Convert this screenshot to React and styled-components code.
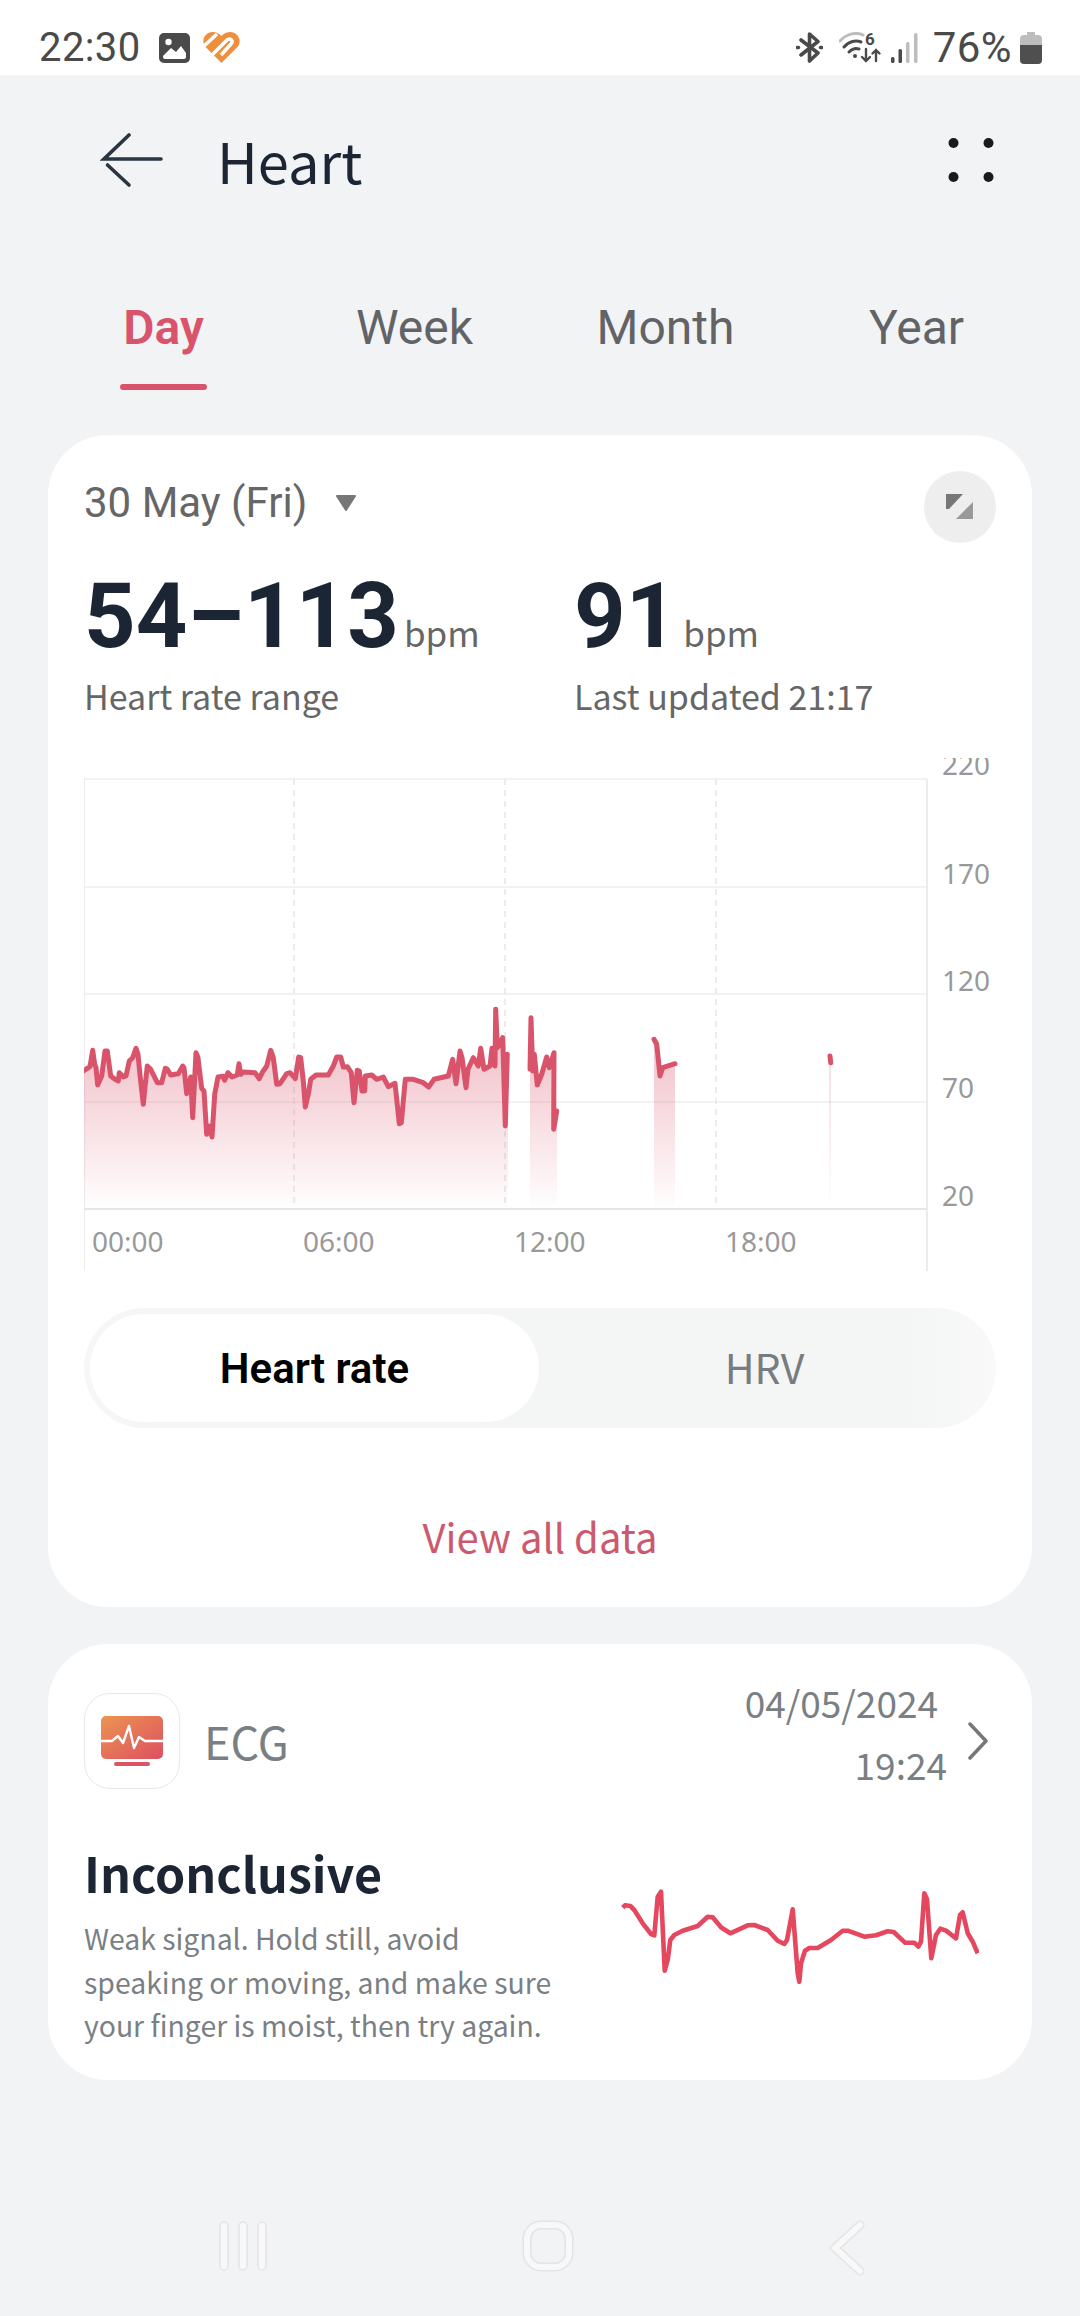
import React from 'react'
import styled, { createGlobalStyle } from 'styled-components'

const GlobalStyle = createGlobalStyle`
    html, body {
        margin: 0;
        padding: 0;
        background: #f2f3f5;
    }
    * {
        box-sizing: border-box;
    }
`

const CJK = '"Noto Sans CJK SC", "Noto Sans", sans-serif'
const ROBOTO = 'Roboto, "Liberation Sans", sans-serif'

const Page = styled.div`
    width: 1080px;
    height: 2316px;
    display: flex;
    flex-direction: column;
    overflow: hidden;
    background: #f2f3f5;
    font-family: ${CJK};
`

/* status bar */
const StatusBar = styled.div`
    height: 75px;
    flex: none;
    background: #fff;
    display: flex;
    align-items: center;
    justify-content: space-between;
    padding: 20px 38px 0 39px;
`
const StatusGroup = styled.div`
    display: flex;
    align-items: center;
`
const StatusText = styled.span`
    font-family: ${ROBOTO};
    font-size: ${p => p.$size || 40}px;
    line-height: 40px;
    color: #4a4a4a;
    letter-spacing: 0.4px;
    margin: ${p => p.$margin || 0};
`
const Icon = styled.svg`
    display: block;
    flex: none;
    margin: ${p => p.$margin || 0};
`

/* header */
const Header = styled.div`
    height: 170px;
    flex: none;
    display: flex;
    align-items: center;
    padding: 0 86px 0 100px;
`
const Title = styled.h1`
    margin: 0 0 0 53px;
    font-size: 56px;
    font-weight: 400;
    line-height: 70px;
    color: #1c2533;
    flex: 1;
`

/* tabs */
const TabRow = styled.div`
    height: 190px;
    flex: none;
    display: grid;
    grid-template-columns: repeat(4, 251px);
    padding: 0 38px;
`
const Tab = styled.div`
    display: flex;
    flex-direction: column;
    align-items: center;
    padding-top: 53px;
    font-family: ${ROBOTO};
    font-size: 48px;
    line-height: 60px;
    font-weight: ${p => (p.$active ? 600 : 400)};
    color: ${p => (p.$active ? '#d9546b' : '#616366')};
`
const TabLine = styled.div`
    width: 87px;
    height: 6px;
    border-radius: 3px;
    margin-top: 26px;
    background: #d9546b;
`

/* cards */
const Card = styled.section`
    flex: none;
    margin: ${p => p.$margin || 0};
    height: ${p => p.$height}px;
    background: #fff;
    border-radius: 60px;
    padding: 0 36px;
`
const DateRow = styled.div`
    display: flex;
    align-items: center;
    padding-top: 36px;
    height: 108px;
`
const DateText = styled.span`
    font-family: ${ROBOTO};
    font-size: 42px;
    line-height: 50px;
    color: #666;
    margin-top: -8px;
`
const ExpandButton = styled.div`
    width: 72px;
    height: 72px;
    border-radius: 50%;
    background: #eeeeee;
    margin-left: auto;
    display: flex;
    align-items: center;
    justify-content: center;
`
const Stats = styled.div`
    display: grid;
    grid-template-columns: 490px 1fr;
    margin-top: 29px;
`
const Stat = styled.div`
    display: flex;
    flex-direction: column;
`
const ValueLine = styled.div`
    display: flex;
    align-items: baseline;
    height: 90px;
`
const Value = styled.span`
    font-family: ${ROBOTO};
    font-size: 90px;
    line-height: 90px;
    font-weight: 700;
    color: #1c2533;
`
const Unit = styled.span`
    font-size: 35px;
    color: #666;
    margin-left: ${p => p.$gap || 5}px;
`
const StatLabel = styled.div`
    font-size: 34px;
    line-height: 44px;
    color: #666;
    margin-top: 12px;
`
const Chart = styled.svg`
    display: block;
    width: 916px;
    height: 520px;
    margin-top: 40px;
    font-family: "Noto Sans", sans-serif;
    font-size: 28px;
    fill: #999;
`
const Segment = styled.div`
    width: 912px;
    height: 120px;
    margin-top: 30px;
    border-radius: 60px;
    padding: 6px;
    display: flex;
    background: linear-gradient(to right, #f6f8f8 0, #f4f5f5 8%, #f4f5f5 90%, #f9f9f9 100%);
`
const SegmentItem = styled.div`
    height: 108px;
    display: flex;
    align-items: center;
    justify-content: center;
    border-radius: 54px;
    width: ${p => (p.$active ? '449px' : 'auto')};
    flex: ${p => (p.$active ? 'none' : 1)};
    background: ${p => (p.$active ? '#fff' : 'transparent')};
    padding-bottom: ${p => (p.$active ? 0 : 4)}px;
    font-family: ${p => (p.$active ? ROBOTO : CJK)};
    font-size: ${p => (p.$active ? 42 : 41)}px;
    font-weight: ${p => (p.$active ? 600 : 400)};
    color: ${p => (p.$active ? '#000' : '#777c80')};
`
const ViewAll = styled.div`
    text-align: center;
    font-size: 40px;
    line-height: 56px;
    color: #cc5a6e;
    margin-top: 80px;
`

/* ecg card */
const EcgHead = styled.div`
    display: flex;
    align-items: center;
    padding-top: 42px;
`
const EcgIcon = styled.div`
    width: 96px;
    height: 96px;
    flex: none;
    border: 1.5px solid #e8e8e8;
    border-radius: 26px;
    display: flex;
    align-items: center;
    justify-content: center;
`
const EcgName = styled.span`
    font-size: 45px;
    line-height: 56px;
    color: #7a7f83;
    margin-left: 24px;
`
const EcgWhen = styled.div`
    margin-left: auto;
    display: flex;
    flex-direction: column;
    align-items: flex-end;
    margin-top: -15px;
    font-size: 37px;
    line-height: 62px;
    color: #7a7f83;
`
const WhenLine = styled.span`
    margin-right: ${p => p.$right || 0}px;
`
const Chevron = styled.svg`
    display: block;
    flex: none;
    margin: 0 7px 0 20px;
`
const EcgBody = styled.div`
    display: flex;
    justify-content: space-between;
`
const EcgText = styled.div`
    width: 520px;
`
const EcgTitle = styled.h2`
    margin: 42px 0 0;
    font-size: 48.4px;
    line-height: 70px;
    font-weight: 600;
    color: #1c2533;
`
const EcgNote = styled.p`
    margin: 9px 0 0;
    font-size: 28.4px;
    line-height: 43.5px;
    color: #7a7f84;
    white-space: nowrap;
`
const EcgTrace = styled.svg`
    display: block;
    flex: none;
    margin: 90px 17px 0 0;
`

/* nav bar */
const NavBar = styled.nav`
    margin-top: auto;
    height: 116px;
    flex: none;
    display: flex;
    justify-content: space-between;
    align-items: flex-start;
    padding: 20px 215px 0 219px;
`

const fromZoomA = pts => pts.map(([x, y]) => [60 + x / 3, 950 + y / 3])
const fromZoomB = pts => pts.map(([x, y]) => [480 + x / 3, 950 + y / 3])
const toLine = pts => pts.map(([x, y], i) => `${i ? 'L' : 'M'}${x.toFixed(1)} ${y.toFixed(1)}`).join(' ')

const FLOOR = 1206

const traces = [
    {
        from: 84,
        to: 508,
        pts: fromZoomA([
            [73, 358], [90, 347], [98, 298], [104, 340], [108, 350], [113, 402], [125, 375], [135, 300], [142, 300],
            [152, 375], [165, 385], [175, 390], [178, 365], [190, 378], [198, 375], [208, 330], [218, 320], [228, 292],
            [234, 310], [240, 372], [250, 460], [256, 400], [262, 345], [272, 355], [292, 395], [305, 395], [316, 352],
            [322, 355], [332, 372], [355, 368], [368, 345], [372, 350], [380, 428], [392, 378], [398, 500], [408, 305],
            [414, 320], [425, 412], [432, 420], [440, 550], [448, 525], [456, 558], [464, 430], [474, 378], [490, 376],
            [494, 388], [504, 365], [516, 378], [532, 372], [537, 338], [542, 370], [550, 363], [585, 365], [598, 383],
            [608, 362], [620, 345], [632, 298], [640, 320], [650, 400], [660, 398], [680, 368], [690, 365], [706, 383],
            [716, 318], [722, 320], [730, 390], [736, 468], [745, 430], [752, 385], [768, 372], [805, 372], [820, 345],
            [830, 318], [842, 318], [850, 348], [862, 347], [874, 365], [882, 455], [892, 358], [898, 360], [906, 420],
            [914, 420], [916, 375], [935, 372], [950, 385], [970, 378], [985, 407], [1005, 397], [1018, 518], [1024, 515],
            [1036, 385], [1060, 385], [1090, 395], [1106, 408], [1122, 385], [1165, 375], [1178, 325], [1188, 398],
            [1200, 300], [1206, 320], [1218, 410], [1224, 355], [1240, 320], [1255, 345], [1262, 292], [1272, 355],
            [1290, 345], [1296, 292], [1305, 345], [1307, 175], [1312, 290], [1328, 260], [1336, 525], [1342, 310],
        ]),
    },
    {
        from: 530,
        to: 557,
        pts: fromZoomB([
            [150, 355], [153, 200], [158, 360], [163, 310], [172, 402], [185, 370], [200, 318], [208, 350], [222, 305],
            [221, 535], [230, 480],
        ]),
    },
    {
        from: 654,
        to: 675,
        pts: fromZoomB([[522, 265], [530, 280], [540, 375], [548, 350], [585, 338]]),
    },
    {
        from: 829.4,
        to: 830.6,
        pts: fromZoomB([[1050, 315], [1052, 335]]),
    },
]

const ecgPoints = [
    [65, 143], [72, 136], [88, 138], [100, 150], [125, 190], [150, 222], [160, 226], [170, 110], [180, 95], [191, 332],
    [200, 300], [208, 240], [220, 225], [245, 212], [290, 198], [320, 170], [335, 172], [360, 202], [388, 220], [440, 196],
    [460, 195], [500, 210], [530, 242], [550, 252], [558, 240], [575, 148], [590, 340], [595, 365], [600, 310], [612, 272],
    [625, 264], [650, 264], [690, 240], [725, 212], [740, 212], [790, 230], [825, 226], [860, 214], [878, 216], [912, 248],
    [940, 248], [952, 260], [960, 245], [970, 100], [978, 118], [991, 295], [1005, 225], [1018, 206], [1035, 212], [1065, 235],
    [1077, 165], [1085, 157], [1100, 220], [1115, 245], [1130, 280],
].map(([x, y]) => [x / 3, y / 3])

const HeartChart = () => (
    <Chart viewBox="84 757 916 520">
        <defs>
            <linearGradient id="hrFill" gradientUnits="userSpaceOnUse" x1="0" y1="1070" x2="0" y2="1206">
                <stop offset="0" stopColor="#d9546b" stopOpacity="0.3" />
                <stop offset="1" stopColor="#d9546b" stopOpacity="0.01" />
            </linearGradient>
        </defs>
        {[778, 886, 993, 1101].map(y => (
            <line key={y} x1="84" x2="927" y1={y} y2={y} stroke="#eeeeee" strokeWidth="1.5" />
        ))}
        <line x1="84" x2="927" y1="1208" y2="1208" stroke="#e6e6e6" strokeWidth="2" />
        <line x1="84" x2="84" y1="778" y2="1270" stroke="#e6e6e6" strokeWidth="1.5" />
        <line x1="927" x2="927" y1="778" y2="1270" stroke="#e6e6e6" strokeWidth="1.5" />
        {[294, 505, 716].map(x => (
            <line key={x} x1={x} x2={x} y1="778" y2="1208" stroke="#e6e6e6" strokeWidth="1.5" strokeDasharray="6 5" />
        ))}
        {traces.map((t, i) => (
            <path
                key={i}
                d={`${toLine([[t.from, t.pts[0][1]], ...t.pts, [t.to, t.pts[t.pts.length - 1][1]]])} L${t.to} ${FLOOR} L${t.from} ${FLOOR} Z`}
                fill="url(#hrFill)"
            />
        ))}
        {traces.map((t, i) => (
            <path key={i} d={toLine(t.pts)} fill="none" stroke="#d9546b" strokeWidth="5" strokeLinejoin="round" strokeLinecap="round" />
        ))}
        {[['220', 774], ['170', 883], ['120', 990], ['70', 1097], ['20', 1205]].map(([label, y]) => (
            <text key={label} x="942" y={y}>{label}</text>
        ))}
        {[['00:00', 92], ['06:00', 303], ['12:00', 514], ['18:00', 725]].map(([label, x]) => (
            <text key={label} x={x} y="1251">{label}</text>
        ))}
    </Chart>
)

const App = () => (
    <Page>
        <GlobalStyle />
        <StatusBar>
            <StatusGroup>
                <StatusText>22:30</StatusText>
                <Icon width="31" height="30" viewBox="0 0 31 30" $margin="0 0 0 18px">
                    <rect width="31" height="30" rx="5" fill="#4a4a4a" />
                    <circle cx="9.500" cy="9" r="3.200" fill="#fff" />
                    <path d="M4 23 L12 15 L17 19 L22 13 L27 20 V24 Q27 26 25 26 H6 Q4 26 4 24 Z" fill="#fff" />
                </Icon>
                <Icon width="37" height="31" viewBox="0 0 37 31" $margin="0 0 0 13px">
                    <path d="M18.500 31 L2.500 15 C-3 8 3 0 9.500 0 C13 0 16 1.500 18.500 4 C21 1.500 24 0 27.500 0 C34 0 40 8 34.500 15 Z" fill="#ef8f3c" />
                    <path d="M0 15 L14 2 M8 24 L24 8 C27 5 31 9 28 12 L18 23" fill="none" stroke="#fff" strokeWidth="3.500" />
                </Icon>
            </StatusGroup>
            <StatusGroup>
                <Icon width="27" height="31" viewBox="0 0 27 31" fill="none" stroke="#4a4a4a" strokeWidth="3.600" strokeLinejoin="round" strokeLinecap="round">
                    <path d="M5 8 L22 21 L13.500 29 V2 L22 9.500 L5 23" />
                    <path d="M1.500 15.500 L2.500 15.500 M24.500 15.500 L25.500 15.500" />
                </Icon>
                <Icon width="44" height="31" viewBox="0 0 44 31" fill="none" strokeLinecap="round" $margin="0 0 0 16px">
                    <path d="M1 9 C8 1 18 0 24 3" stroke="#bdbdbd" strokeWidth="3" />
                    <path d="M5 15 C10 9 17 8 22 10" stroke="#4a4a4a" strokeWidth="3" />
                    <path d="M10 20 C13 17 17 16 20 17" stroke="#4a4a4a" strokeWidth="3" />
                    <circle cx="16" cy="24" r="2" fill="#4a4a4a" />
                    <text x="26" y="13" fontFamily="Roboto, sans-serif" fontSize="17" fontWeight="700" fill="#4a4a4a">6</text>
                    <path d="M27 17 V29 M23 25 L27 29 L31 25 M37 29 V18 M33.500 21.500 L37 18 L40.500 21.500" stroke="#4a4a4a" strokeWidth="2.400" />
                </Icon>
                <Icon width="27" height="30" viewBox="0 0 27 30" $margin="0 0 0 8px">
                    <rect x="0" y="24" width="3.500" height="6" rx="1.500" fill="#4a4a4a" />
                    <rect x="7.500" y="16" width="3.500" height="14" rx="1.500" fill="#4a4a4a" />
                    <rect x="15" y="9" width="3.500" height="21" rx="1.500" fill="#bdbdbd" />
                    <rect x="23" y="0" width="3.500" height="30" rx="1.500" fill="#bdbdbd" />
                </Icon>
                <StatusText $size={42} $margin="0 0 0 15px">76%</StatusText>
                <Icon width="22" height="32" viewBox="0 0 22 32" $margin="0 0 0 8px">
                    <path d="M7 0 H15 V3 H18 Q22 3 22 7 V13 H0 V7 Q0 3 4 3 H7 Z" fill="#bdbdbd" />
                    <path d="M0 13 H22 V28 Q22 32 18 32 H4 Q0 32 0 28 Z" fill="#4f4f4f" />
                </Icon>
            </StatusGroup>
        </StatusBar>

        <Header>
            <Icon width="64" height="56" viewBox="0 0 64 56" fill="none" stroke="#2a3442" strokeWidth="3.600" strokeLinecap="round">
                <path d="M29 3 L4 27 L61 27" />
                <path d="M7.500 33 L29 53" />
            </Icon>
            <Title>Heart</Title>
            <Icon width="46" height="46" viewBox="0 0 46 46" fill="#1a1a1a">
                <circle cx="5.500" cy="6" r="5" />
                <circle cx="40.500" cy="6" r="5" />
                <circle cx="5.500" cy="40" r="5" />
                <circle cx="40.500" cy="40" r="5" />
            </Icon>
        </Header>

        <TabRow>
            <Tab $active>
                Day
                <TabLine />
            </Tab>
            <Tab>Week</Tab>
            <Tab>Month</Tab>
            <Tab>Year</Tab>
        </TabRow>

        <Card $margin="0 48px" $height={1172}>
            <DateRow>
                <DateText>30 May (Fri)</DateText>
                <Icon width="22" height="16" viewBox="0 0 22 16" $margin="-8px 0 0 28px">
                    <path d="M2 1 H20 L11 15 Z" fill="#777" stroke="#777" strokeWidth="2" strokeLinejoin="round" />
                </Icon>
                <ExpandButton>
                    <Icon width="28" height="26" viewBox="0 0 28 26">
                        <path d="M0 0 H17 L3 15 H0 Z" fill="#777" />
                        <path d="M27 8 V25 H10 Z" fill="#999" />
                    </Icon>
                </ExpandButton>
            </DateRow>
            <Stats>
                <Stat>
                    <ValueLine>
                        <Value>54–113</Value>
                        <Unit>bpm</Unit>
                    </ValueLine>
                    <StatLabel>Heart rate range</StatLabel>
                </Stat>
                <Stat>
                    <ValueLine>
                        <Value>91</Value>
                        <Unit $gap={6}>bpm</Unit>
                    </ValueLine>
                    <StatLabel>Last updated 21:17</StatLabel>
                </Stat>
            </Stats>
            <HeartChart />
            <Segment>
                <SegmentItem $active>Heart rate</SegmentItem>
                <SegmentItem>HRV</SegmentItem>
            </Segment>
            <ViewAll>View all data</ViewAll>
        </Card>

        <Card $margin="37px 48px 0" $height={436}>
            <EcgHead>
                <EcgIcon>
                    <Icon width="62" height="50" viewBox="0 0 62 50">
                        <defs>
                            <linearGradient id="ecgFill" x1="0" y1="0" x2="1" y2="1">
                                <stop offset="0" stopColor="#ec9550" />
                                <stop offset="1" stopColor="#dd4f62" />
                            </linearGradient>
                        </defs>
                        <rect width="62" height="43" rx="5" fill="url(#ecgFill)" />
                        <rect x="13" y="46" width="36" height="4" rx="2" fill="#dd5463" />
                        <path d="M0 25 H11 L17 20 L22 27 L28 10 L33 32 L38 21 L44 25 H62" fill="none" stroke="#fff" strokeWidth="2.400" strokeLinejoin="round" />
                    </Icon>
                </EcgIcon>
                <EcgName>ECG</EcgName>
                <EcgWhen>
                    <WhenLine $right={9}>04/05/2024</WhenLine>
                    <WhenLine>19:24</WhenLine>
                </EcgWhen>
                <Chevron width="22" height="38" viewBox="0 0 22 38" fill="none" stroke="#777" strokeWidth="3.500" strokeLinecap="round" strokeLinejoin="round">
                    <path d="M3 2 L19 19 L3 36" />
                </Chevron>
            </EcgHead>
            <EcgBody>
                <EcgText>
                    <EcgTitle>Inconclusive</EcgTitle>
                    <EcgNote>
                        Weak signal. Hold still, avoid
                        <br />
                        speaking or moving, and make sure
                        <br />
                        your finger is moist, then try again.
                    </EcgNote>
                </EcgText>
                <EcgTrace width="360" height="130" viewBox="18 25 360 130">
                    <path d={toLine(ecgPoints)} fill="none" stroke="#e5475f" strokeWidth="4.600" strokeLinejoin="round" />
                </EcgTrace>
            </EcgBody>
        </Card>

        <NavBar>
            <Icon width="48" height="52" viewBox="0 0 48 52" fill="#f8f8f9" stroke="#e3e4e6" strokeWidth="1.500">
                <rect x="1" y="2" width="8" height="48" rx="4" />
                <rect x="20" y="2" width="8" height="48" rx="4" />
                <rect x="39" y="2" width="8" height="48" rx="4" />
            </Icon>
            <Icon width="52" height="52" viewBox="0 0 52 52" fill="none">
                <rect x="5" y="5" width="42" height="42" rx="14" stroke="#e3e4e6" strokeWidth="9" />
                <rect x="5" y="5" width="42" height="42" rx="14" stroke="#f8f8f9" strokeWidth="6" />
            </Icon>
            <Icon width="36" height="56" viewBox="0 0 36 56" fill="none" strokeLinecap="round" strokeLinejoin="miter">
                <path d="M31 5 L6 28 L31 51" stroke="#e3e4e6" strokeWidth="9" />
                <path d="M31 5 L6 28 L31 51" stroke="#f8f8f9" strokeWidth="6" />
            </Icon>
        </NavBar>
    </Page>
)

export default App
